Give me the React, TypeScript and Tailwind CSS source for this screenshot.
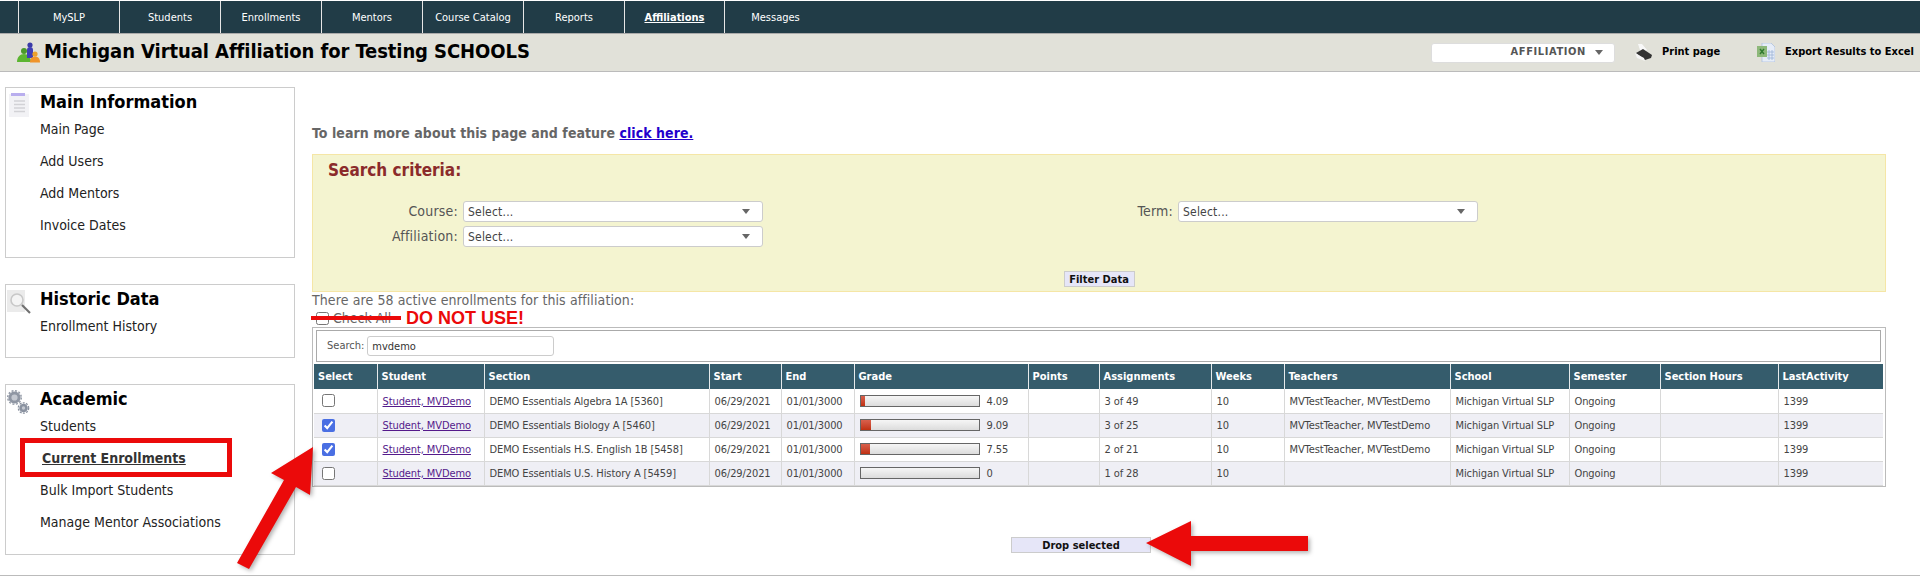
import React from "react";

const NAV_ITEMS = ["MySLP", "Students", "Enrollments", "Mentors", "Course Catalog", "Reports", "Affiliations", "Messages"];

const COLUMNS = [
  { name: "Select", width: "w-[63px]" },
  { name: "Student", width: "w-[107px]" },
  { name: "Section", width: "w-[225px]" },
  { name: "Start", width: "w-[72px]" },
  { name: "End", width: "w-[73px]" },
  { name: "Grade", width: "w-[174px]" },
  { name: "Points", width: "w-[71px]" },
  { name: "Assignments", width: "w-[112px]" },
  { name: "Weeks", width: "w-[73px]" },
  { name: "Teachers", width: "w-[166px]" },
  { name: "School", width: "w-[119px]" },
  { name: "Semester", width: "w-[91px]" },
  { name: "Section Hours", width: "w-[118px]" },
  { name: "LastActivity", width: "w-[105px]" },
];

const ROWS = [
  { checked: false, section: "DEMO Essentials Algebra 1A [5360]", grade: 4.09, assignments: "3 of 49", teachers: "MVTestTeacher, MVTestDemo" },
  { checked: true, section: "DEMO Essentials Biology A [5460]", grade: 9.09, assignments: "3 of 25", teachers: "MVTestTeacher, MVTestDemo" },
  { checked: true, section: "DEMO Essentials H.S. English 1B [5458]", grade: 7.55, assignments: "2 of 21", teachers: "MVTestTeacher, MVTestDemo" },
  { checked: false, section: "DEMO Essentials U.S. History A [5459]", grade: 0, assignments: "1 of 28", teachers: "" },
];

const GroupIcon = () => (
  <svg width="24" height="21" viewBox="0 0 24 21">
    <circle cx="7" cy="9" r="3" fill="#4a9a2a" />
    <path d="M0 20c0-5 3-8 7-8s7 3 7 8z" fill="#5cb531" />
    <circle cx="13" cy="3" r="2.6" fill="#3a3aa8" />
    <path d="M10 16V8c0-2 1-3 3-3s3 1 3 3v8z" fill="#3f3fb5" />
    <circle cx="18" cy="12" r="2.6" fill="#eba02c" />
    <path d="M13 20.5c0-4 2-6 5-6s5 2 5 6z" fill="#f0942a" />
  </svg>
);

const DocIcon = () => (
  <svg width="20" height="24" viewBox="0 0 20 24">
    <rect x="0" y="1" width="20" height="23" fill="#f2f2f5" />
    <rect x="2" y="0" width="14" height="3" fill="#b9aeee" />
    <path d="M5 8h11M5 11.5h11M5 15h11M5 18.5h11" stroke="#d2d2d6" strokeWidth="1.5" />
  </svg>
);

const SearchDocIcon = () => (
  <svg className="-ml-[2px]" width="24" height="24" viewBox="0 0 24 24">
    <rect x="0" y="0" width="18" height="22" fill="#ebebeb" />
    <circle cx="10" cy="10" r="6" fill="#f4f4f4" stroke="#c8c8c8" strokeWidth="1.6" />
    <path d="M15 15l8 8" stroke="#707070" strokeWidth="2.2" />
  </svg>
);

const GearsIcon = () => (
  <svg className="-ml-[2px]" width="23" height="25" viewBox="0 0 23 25">
    <circle cx="7.5" cy="7.5" r="4.6" fill="#c4c8d0" stroke="#8f96a3" strokeWidth="3" />
    <circle cx="7.5" cy="7.5" r="6.8" fill="none" stroke="#8f96a3" strokeWidth="1.4" strokeDasharray="2 1.6" />
    <circle cx="16.5" cy="18" r="3" fill="#c4c8d0" stroke="#8a92a0" strokeWidth="2.6" />
    <circle cx="16.5" cy="18" r="5.2" fill="none" stroke="#8a92a0" strokeWidth="1.3" strokeDasharray="2 1.3" />
  </svg>
);

const PrinterIcon = () => (
  <svg width="18" height="17" viewBox="0 0 18 17">
    <path d="M3 0l4 0 5 6-6 3z" fill="#f8f8f8" />
    <path d="M1 9l7-4 9 6-1 3-6 2z" fill="#333" />
    <path d="M0 9l9 5 1 3-8-3z" fill="#f4f4f4" />
  </svg>
);

const ExcelIcon = () => (
  <svg width="18" height="19" viewBox="0 0 18 19">
    <path d="M5 0h9l4 4v15H5z" fill="#e6edf8" stroke="#a8bcdc" strokeWidth="0.7" />
    <path d="M10 9h7M10 12h7M10 15h7M12 7v10M15 7v10" stroke="#9db4d6" strokeWidth="0.8" />
    <rect x="0" y="3" width="10" height="11" fill="#8db87a" />
    <path d="M3 6l4 5M7 6l-4 5" stroke="#2f7a2f" strokeWidth="1.4" />
  </svg>
);

const Caret = () => <span className="h-0 w-0 border-x-[4px] border-t-[5px] border-x-transparent border-t-[#666]" />;

const SidePanel: React.FC<{
  title: string;
  icon: React.ReactNode;
  links: string[];
  className: string;
  children?: React.ReactNode;
}> = ({ title, icon, links, className, children }) => (
  <section className={`relative flex border border-[#ccc] pt-[2px] ${className}`}>
    <div className="w-[34px] pl-[3px] pt-[3px]">{icon}</div>
    <div>
      <h2 className="flex h-[24px] items-center text-[18px] font-bold leading-none text-black">{title}</h2>
      <ul className="-mt-[1px]">
        {links.map((link) => (
          <li
            key={link}
            className={
              link === "Current Enrollments"
                ? "ml-[2px] flex h-[32px] items-center text-[14px] font-bold text-[#333] underline"
                : "flex h-[32px] items-center text-[14px] text-[#222]"
            }
          >
            {link}
          </li>
        ))}
      </ul>
    </div>
    {children}
  </section>
);

const SelectBox: React.FC<{ className?: string }> = ({ className }) => (
  <div className={`flex h-[21px] w-[300px] items-center justify-between rounded-[3px] border border-[#ccc] bg-white pl-[4px] pr-[12px] text-[12px] text-[#444] ${className ?? ""}`}>
    <span>Select...</span>
    <Caret />
  </div>
);

const GradeBar: React.FC<{ grade: number }> = ({ grade }) => (
  <div className="flex items-center gap-[7px]">
    <div className="h-[12px] w-[120px] overflow-hidden border border-[#666] bg-gradient-to-b from-[#f6f6f6] to-[#dcdcdc]">
      <div
        className="h-full bg-gradient-to-b from-[#d8604c] to-[#c0300f]"
        style={{ width: `${grade * 1.2}px` }}
      />
    </div>
    <span className="pt-[2px]">{grade === 0 ? "0" : grade}</span>
  </div>
);

const EnrollmentTable = () => (
  <table className="ml-[1px] mt-[2px] w-[1569px] table-fixed border-collapse text-[11px] text-[#444]">
    <thead>
      <tr className="h-[25px] bg-[#355c6c] text-left text-[11px] font-bold text-white">
        {COLUMNS.map((col) => (
          <th key={col.name} className={`${col.width} border-l border-[#e6eaec] pl-[4px] pt-[2px] first:border-l-0`}>
            {col.name}
          </th>
        ))}
      </tr>
    </thead>
    <tbody className="tracking-[-0.1px]">
      {ROWS.map((row) => (
        <tr key={row.section} className="h-[24px] border-b border-[#d8d8d8] bg-white even:bg-[#efeff5]">
          <td className="border-r border-[#d8d8d8] pl-[8px]">
            <input type="checkbox" readOnly checked={row.checked} className="block size-[13px] accent-[#4a6fe3]" />
          </td>
          <td className="border-r border-[#d8d8d8] pl-[5px] pt-[2px]">
            <a className="text-[#551a8b] underline">Student, MVDemo</a>
          </td>
          <td className="border-r border-[#d8d8d8] pl-[5px] pt-[2px] whitespace-nowrap">{row.section}</td>
          <td className="border-r border-[#d8d8d8] pl-[5px] pt-[2px]">06/29/2021</td>
          <td className="border-r border-[#d8d8d8] pl-[5px] pt-[2px]">01/01/3000</td>
          <td className="border-r border-[#d8d8d8] pl-[5px]">
            <GradeBar grade={row.grade} />
          </td>
          <td className="border-r border-[#d8d8d8]" />
          <td className="border-r border-[#d8d8d8] pl-[5px] pt-[2px]">{row.assignments}</td>
          <td className="border-r border-[#d8d8d8] pl-[5px] pt-[2px]">10</td>
          <td className="border-r border-[#d8d8d8] pl-[5px] pt-[2px] whitespace-nowrap">{row.teachers}</td>
          <td className="border-r border-[#d8d8d8] pl-[5px] pt-[2px] whitespace-nowrap">Michigan Virtual SLP</td>
          <td className="border-r border-[#d8d8d8] pl-[5px] pt-[2px]">Ongoing</td>
          <td className="border-r border-[#d8d8d8]" />
          <td className="pl-[5px] pt-[2px]">1399</td>
        </tr>
      ))}
    </tbody>
  </table>
);

const Annotations = () => (
  <svg className="pointer-events-none absolute left-0 top-0 drop-shadow-[2px_2px_2px_rgba(0,0,0,0.3)]" width="1920" height="577">
    <polygon points="313,447 310,495 296,487 249,569 237,563 284,480 271,473" fill="#eb0a0a" />
    <polygon points="1146,543 1191,521 1191,536 1308,536 1308,551 1191,551 1191,566" fill="#eb0a0a" />
  </svg>
);

export default function App() {
  return (
    <div className="relative h-[577px] w-full overflow-hidden bg-white font-['DejaVu_Sans_Condensed','DejaVu_Sans',sans-serif]">
      <nav className="flex h-[34px] border-y border-t-white border-b-[#aaa] bg-[#213c47] pl-[18px]">
        {NAV_ITEMS.map((item) => (
          <a
            key={item}
            className={
              item === "Affiliations"
                ? "flex w-[101px] items-center justify-center border-x border-[#e6e6e6] pt-[2px] text-[11px] font-bold text-white underline"
                : item === "Messages"
                  ? "flex w-[101px] items-center justify-center pt-[2px] text-[11px] text-white"
                  : "flex w-[101px] items-center justify-center border-l border-[#e6e6e6] pt-[2px] text-[11px] text-white"
            }
          >
            {item}
          </a>
        ))}
      </nav>

      <header className="flex h-[38px] items-center border-b border-[#bbb] bg-[#e1e1d9] pl-[17px]">
        <GroupIcon />
        <h1 className="-mt-[3px] ml-[3px] text-[20px] font-bold tracking-[-0.08px] text-black">Michigan Virtual Affiliation for Testing SCHOOLS</h1>
        <div className="ml-auto flex h-[20px] w-[184px] items-center justify-end gap-[9px] rounded-[3px] border border-[#ddd] bg-white pr-[11px] text-[11px] font-bold tracking-[0.6px] text-[#555]">
          AFFILIATION
          <Caret />
        </div>
        <div className="ml-[20px] flex w-[122px] items-center gap-[9px] text-[11px] font-bold text-black">
          <PrinterIcon />
          Print page
        </div>
        <div className="flex w-[163px] items-center gap-[10px] text-[11px] font-bold text-black">
          <ExcelIcon />
          Export Results to Excel
        </div>
      </header>

      <main className="flex h-[504px] border-b border-[#bbb]">
        <aside className="ml-[5px] flex w-[290px] flex-col gap-[26px] pt-[15px]">
          <SidePanel
            title="Main Information"
            icon={<DocIcon />}
            links={["Main Page", "Add Users", "Add Mentors", "Invoice Dates"]}
            className="h-[171px]"
          />
          <SidePanel title="Historic Data" icon={<SearchDocIcon />} links={["Enrollment History"]} className="h-[74px]" />
          <SidePanel
            title="Academic"
            icon={<GearsIcon />}
            links={["Students", "Current Enrollments", "Bulk Import Students", "Manage Mentor Associations"]}
            className="h-[171px]"
          >
            <div className="absolute left-[14px] top-[53px] h-[39px] w-[212px] border-[5px] border-[#eb0a0a]" />
          </SidePanel>
        </aside>

        <div className="ml-[17px] w-[1574px] pt-[51px]">
          <p className="h-[20px] text-[14px] font-bold leading-[20px] tracking-[0.05px] text-[#666]">
            To learn more about this page and feature <a className="text-[#2200cc] underline">click here.</a>
          </p>

          <section className="mt-[11px] h-[138px] border border-[#f5e6a6] bg-[#f4f4d0]">
            <h3 className="ml-[15px] mt-[4px] flex h-[24px] items-center text-[17px] font-bold text-[#8b2b2b]">Search criteria:</h3>
            <div className="mt-[18px] flex text-[14px] tracking-[0.2px] text-[#555]">
              <div className="flex flex-col gap-[4px]">
                <div className="flex items-center gap-[5px]">
                  <label className="w-[145px] text-right">Course:</label>
                  <SelectBox />
                </div>
                <div className="flex items-center gap-[5px]">
                  <label className="w-[145px] text-right">Affiliation:</label>
                  <SelectBox />
                </div>
              </div>
              <div className="flex h-[21px] items-center gap-[5px]">
                <label className="w-[410px] text-right">Term:</label>
                <SelectBox />
              </div>
            </div>
            <button className="mx-auto mt-[24px] block h-[16px] w-[71px] border border-[#ccc] bg-[#e6e6f8] text-[11px] font-bold leading-none text-[#111]">
              Filter Data
            </button>
          </section>

          <p className="h-[17px] text-[14px] leading-[17px] tracking-[0.1px] text-[#666]">There are 58 active enrollments for this affiliation:</p>
          <div className="relative flex h-[18px] items-center gap-[4px] pl-[4px] text-[14px] text-[#666]">
            <input type="checkbox" readOnly className="size-[13px]" />
            <span>Check All</span>
            <div className="absolute left-[-1px] top-[7px] h-[4px] w-[90px] bg-[#eb0a0a]" />
            <span className="absolute left-[94px] top-0 font-['Liberation_Sans',sans-serif] text-[18px] font-bold leading-[18px] text-[#eb0a0a]">
              DO NOT USE!
            </span>
          </div>

          <section className="h-[160px] border border-[#bbb]">
            <div className="ml-[3px] mt-[2px] flex h-[32px] w-[1565px] items-center border border-[#aaa] pl-[10px] text-[11px] text-[#555]">
              <span>Search:</span>
              <input
                readOnly
                value="mvdemo"
                className="ml-[3px] h-[20px] w-[187px] rounded-[3px] border border-[#ccc] pl-[4px] text-[11px] text-[#333]"
              />
            </div>
            <EnrollmentTable />
          </section>

          <button className="ml-[699px] mt-[50px] block h-[16px] w-[140px] border border-[#ccc] bg-[#e6e6f8] text-[11px] font-bold leading-none text-[#111]">
            Drop selected
          </button>
        </div>
      </main>

      <Annotations />
    </div>
  );
}
